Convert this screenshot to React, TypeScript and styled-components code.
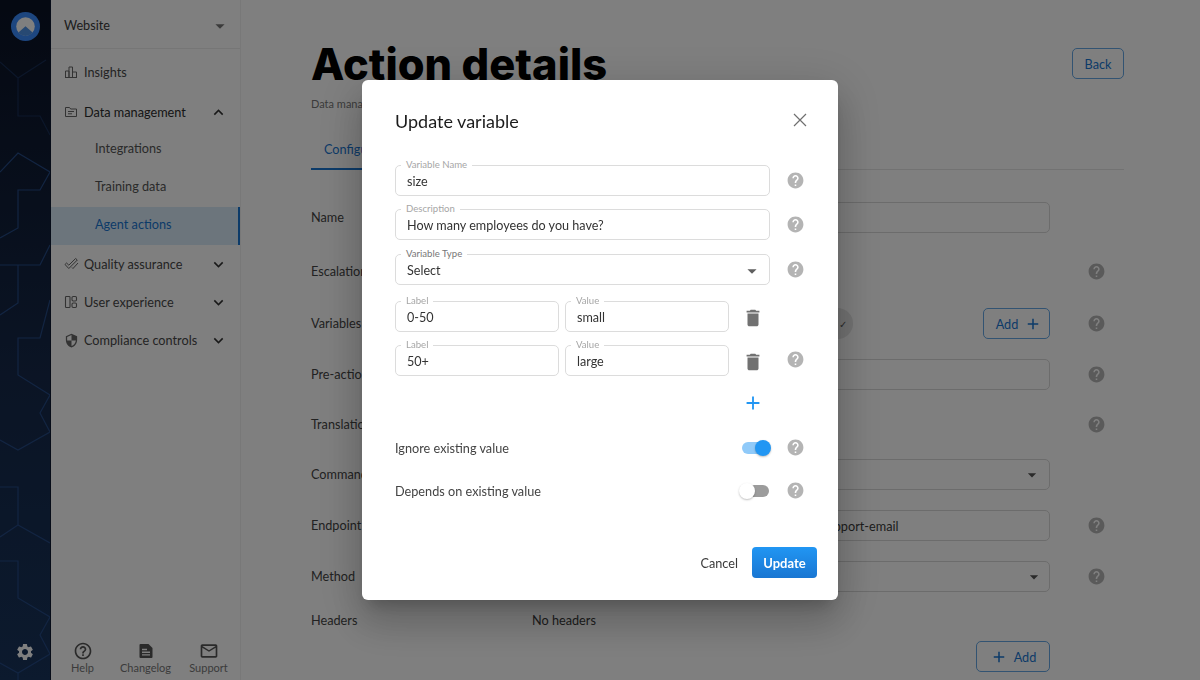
import * as React from 'react';

import styled, { createGlobalStyle } from 'styled-components';
import {
  MdAdd,
  MdArrowDropDown,
  MdDelete,
  MdExpandLess,
  MdExpandMore,
  MdHelp,
  MdHelpOutline,
  MdMailOutline,
  MdSecurity,
  MdSettings,
} from 'react-icons/md';

const colorBlue = '#1976d2';
const colorHelp = '#b4b4b4';

const navBelow = [
  { label: 'Quality assurance', icon: <CheckIcon /> },
  { label: 'User experience', icon: <PanelsIcon /> },
  { label: 'Compliance controls', icon: <MdSecurity size={15} /> },
];

const options = [
  { label: '0-50', value: 'small', help: false },
  { label: '50+', value: 'large', help: true },
];

function BarsIcon() {
  return (
    <svg width="14" height="14" viewBox="0 0 14 14" fill="none" stroke="currentColor" strokeWidth="1">
      <path d="M1.5 12.5V6h3.5v6.5M5 12.5V2h3.5v10.5M8.5 12.5V7H12.5v5.5M1 12.5h12" />
    </svg>
  );
}

function FolderIcon() {
  return (
    <svg width="14" height="14" viewBox="0 0 14 14" fill="none" stroke="currentColor" strokeWidth="1">
      <path d="M1.5 11.5V2.5h4l1.2 1.5h5.8v7.5zM4 6.5h6M4 8.8h4" />
    </svg>
  );
}

function CheckIcon() {
  return (
    <svg width="15" height="14" viewBox="0 0 15 14" fill="none" stroke="currentColor" strokeWidth="1">
      <path d="M1 7.5l1.6-1.5 2.2 2.2L11.6 1.5l1.7 1.5-8.5 8.5zM8 10.5l1 1 5-5.5" />
    </svg>
  );
}

function PanelsIcon() {
  return (
    <svg width="14" height="14" viewBox="0 0 14 14" fill="none" stroke="currentColor" strokeWidth="1.1">
      <rect x="1.5" y="1.5" width="4.5" height="11" rx="0.8" />
      <rect x="8" y="1.5" width="4.5" height="4.5" rx="1.2" />
      <rect x="8" y="8" width="4.5" height="4.5" rx="1.2" />
    </svg>
  );
}

function CloseIcon() {
  return (
    <svg width="14" height="14" viewBox="0 0 14 14" stroke="#6f6f6f" strokeWidth="1.2">
      <path d="M1 1l12 12M13 1L1 13" />
    </svg>
  );
}

function ChangelogIcon() {
  return (
    <svg width="20" height="20" viewBox="0 0 20 20">
      <path d="M3.5 4a1 1 0 0 1 1-1h8l4 4v9a1 1 0 0 1-1 1h-11a1 1 0 0 1-1-1z" fill="currentColor" />
      <path d="M6 8.5h5M6 11.2h8M6 13.9h8" stroke="#fff" strokeWidth="1.4" />
    </svg>
  );
}

function Logo() {
  return (
    <svg width="29" height="29" viewBox="0 0 29 29">
      <circle cx="14.5" cy="14.5" r="14.5" fill="#3a8cff" />
      <circle cx="14.5" cy="14.5" r="9.3" fill="#fff" />
      <path d="M7.4 20.6 14.5 14.2 21.6 20.6a9.3 9.3 0 0 1-14.2 0z" fill="#4f93e6" />
    </svg>
  );
}

function RailLines() {
  return (
    <RailArt viewBox="0 0 50 680" fill="none" stroke="#254a85" strokeWidth="1.2">
      <path d="M0 62 18 78 46 60M18 78V116H40L50 135" opacity="0.45" />
      <path d="M0 172 18 153 50 172 40 190H18V228L0 238" />
      <path d="M0 265H40L50 245M18 265V303L0 315M50 300 40 338H18V375L50 395 40 413 50 432 18 450 0 440" />
      <path d="M0 487H18V525L0 537M18 525 50 543" />
      <path d="M0 561H18V598L50 617 40 635 50 654 18 673 0 663M18 673V680" />
    </RailArt>
  );
}

function Help() {
  return (
    <HelpMark>
      <MdHelp size={19} />
    </HelpMark>
  );
}

const App = () => {
  return (
    <Page>
      <GlobalStyle />
      <Rail>
        <RailLines />
        <Logo />
        <MdSettings size={20} />
      </Rail>

      <Side>
        <SideHead>
          Website
          <MdArrowDropDown size={22} />
        </SideHead>
        <Nav>
          <NavItem>
            <NavIcon>
              <BarsIcon />
            </NavIcon>
            Insights
          </NavItem>
          <NavItem $strong>
            <NavIcon>
              <FolderIcon />
            </NavIcon>
            Data management
            <MdExpandLess size={19} />
          </NavItem>
          <SubItem>Integrations</SubItem>
          <SubItem>Training data</SubItem>
          <SubItem $active>Agent actions</SubItem>
          {navBelow.map((item) => (
            <NavItem key={item.label}>
              <NavIcon>{item.icon}</NavIcon>
              {item.label}
              <MdExpandMore size={19} />
            </NavItem>
          ))}
        </Nav>
        <SideFoot>
          <FootLink>
            <MdHelpOutline size={20} />
            Help
          </FootLink>
          <FootLink>
            <ChangelogIcon />
            Changelog
          </FootLink>
          <FootLink>
            <MdMailOutline size={20} />
            Support
          </FootLink>
        </SideFoot>
      </Side>

      <Main>
        <TitleRow>
          <Title>Action details</Title>
          <OutlineButton $width={52}>Back</OutlineButton>
        </TitleRow>
        <Crumb>Data management / Agent actions</Crumb>
        <Tabs>
          <Tab>Configuration</Tab>
        </Tabs>

        <Row $gap={32}>
          <RowLabel>Name</RowLabel>
          <Box />
        </Row>
        <Row $gap={23}>
          <RowLabel>Escalation</RowLabel>
          <div />
          <Help />
        </Row>
        <Row $gap={21}>
          <RowLabel>Variables</RowLabel>
          <VariableCell>
            <Chip>
              <ChipEnd>✓</ChipEnd>
            </Chip>
            <OutlineButton $width={67} $inset={5}>
              Add
              <MdAdd size={18} />
            </OutlineButton>
          </VariableCell>
          <Help />
        </Row>
        <Row $gap={20}>
          <RowLabel>Pre-action</RowLabel>
          <Box />
          <Help />
        </Row>
        <Row $gap={19}>
          <RowLabel>Translation</RowLabel>
          <div />
          <Help />
        </Row>
        <Row $gap={19}>
          <RowLabel>Command</RowLabel>
          <Box $end={7}>
            <MdArrowDropDown size={20} />
          </Box>
        </Row>
        <Row $gap={20}>
          <RowLabel>Endpoint</RowLabel>
          <Box $start={13}>https://api.example.com/v2.1/customers/actions/support-email</Box>
          <Help />
        </Row>
        <Row $gap={20}>
          <RowLabel>Method</RowLabel>
          <Box $end={5}>
            <MdArrowDropDown size={20} />
          </Box>
          <Help />
        </Row>
        <Row $gap={12}>
          <HeadersLabel>Headers</HeadersLabel>
          <span>No headers</span>
        </Row>
        <Row $gap={6}>
          <div />
          <AddCell>
            <OutlineButton $width={74}>
              <MdAdd size={18} />
              Add
            </OutlineButton>
          </AddCell>
        </Row>
      </Main>

      <Backdrop>
        <Modal>
          <ModalHead>
            <ModalTitle>Update variable</ModalTitle>
            <CloseIcon />
          </ModalHead>

          <FieldRow>
            <Field>
              <FieldLabel>Variable Name</FieldLabel>
              size
            </Field>
            <Help />
          </FieldRow>
          <FieldRow $after={14}>
            <Field>
              <FieldLabel>Description</FieldLabel>
              How many employees do you have?
            </Field>
            <Help />
          </FieldRow>
          <FieldRow>
            <Field>
              <FieldLabel $dark>Variable Type</FieldLabel>
              Select
              <MdArrowDropDown size={22} />
            </Field>
            <Help />
          </FieldRow>

          <Options>
            {options.map((option) => (
              <OptionRow key={option.label}>
                <Field>
                  <FieldLabel>Label</FieldLabel>
                  {option.label}
                </Field>
                <Field>
                  <FieldLabel>Value</FieldLabel>
                  {option.value}
                </Field>
                <TrashCell>
                  <MdDelete size={22} />
                </TrashCell>
                {option.help && <Help />}
              </OptionRow>
            ))}
          </Options>
          <PlusRow>
            <MdAdd size={22} />
          </PlusRow>

          <ToggleRow>
            <ToggleLabel>Ignore existing value</ToggleLabel>
            <Switch $on>
              <Thumb $on />
            </Switch>
            <Help />
          </ToggleRow>
          <ToggleRow>
            <ToggleLabel>Depends on existing value</ToggleLabel>
            <Switch>
              <Thumb />
            </Switch>
            <Help />
          </ToggleRow>

          <Actions>
            <Cancel>Cancel</Cancel>
            <Update>Update</Update>
          </Actions>
        </Modal>
      </Backdrop>
    </Page>
  );
};

//------------STYLED------------
const GlobalStyle = createGlobalStyle`
  html, body {
    margin: 0;
    height: 100%;
    overflow: hidden;
  }
  * {
    box-sizing: border-box;
  }
  body {
    font-family: Lato, "Noto Sans", sans-serif;
    font-size: 12.7px;
    color: #3a3a3a;
  }
`;

const Page = styled.div`
  display: flex;
  width: 1200px;
  height: 680px;
  overflow: hidden;
  background: #ffffff;
`;

const Rail = styled.div`
  position: relative;
  width: 51px;
  flex: none;
  padding: 12px 0 18px;
  display: flex;
  flex-direction: column;
  align-items: center;
  justify-content: space-between;
  color: #ffffff;
  background: linear-gradient(180deg, #0a1224 0%, #16294a 55%, #18345c 100%);
  border-right: 1px solid #0c1830;

  > svg:not(:first-child) {
    position: relative;
  }
`;

const RailArt = styled.svg`
  position: absolute;
  top: 0;
  left: 0;
  width: 50px;
  height: 680px;
`;

const Side = styled.div`
  width: 190px;
  flex: none;
  display: flex;
  flex-direction: column;
  border-right: 1px solid #f0f0f0;
  background: #fefefe;
`;

const SideHead = styled.div`
  height: 49px;
  flex: none;
  padding: 2px 9px 0 13px;
  display: flex;
  align-items: center;
  justify-content: space-between;
  border-bottom: 1px solid #ececec;
  font-size: 12.7px;

  svg {
    color: #777777;
    margin-top: 2px;
  }
`;

const Nav = styled.div`
  flex: 1;
  padding-top: 4px;
  display: flex;
  flex-direction: column;
`;

const NavItem = styled.div<{ $strong?: boolean }>`
  height: 38px;
  flex: none;
  padding: 0 12px 0 13px;
  display: flex;
  align-items: center;
  color: ${(props) => (props.$strong ? '#2c2c2c' : '#484848')};

  &:first-child {
    margin-bottom: 2px;
  }

  > svg {
    margin-left: auto;
    color: #333333;
  }
`;

const NavIcon = styled.span`
  width: 20px;
  flex: none;
  display: flex;
  align-items: center;
  color: #666666;
`;

const SubItem = styled.div<{ $active?: boolean }>`
  height: 38px;
  flex: none;
  padding: 0 0 5px 44px;
  display: flex;
  align-items: center;
  color: ${(props) => (props.$active ? colorBlue : '#555555')};
  background: ${(props) => (props.$active ? '#d8eaf8' : 'transparent')};
  border-right: 2px solid ${(props) => (props.$active ? colorBlue : 'transparent')};
`;

const SideFoot = styled.div`
  height: 39px;
  flex: none;
  display: flex;
  align-items: flex-start;
`;

const FootLink = styled.div`
  width: 63px;
  flex: none;
  display: flex;
  flex-direction: column;
  align-items: center;
  font-size: 11px;
  line-height: 14px;
  color: #777777;

  svg {
    color: #555555;
  }
`;

const Main = styled.div`
  flex: 1;
  min-width: 0;
  padding: 40px 76px 0 70px;
`;

const TitleRow = styled.div`
  display: flex;
  align-items: flex-start;
  justify-content: space-between;
`;

const Title = styled.h1`
  margin: 0;
  height: 48px;
  font-family: Inter, sans-serif;
  font-size: 43.4px;
  font-weight: 800;
  line-height: 48px;
  color: #000000;
`;

const OutlineButton = styled.div<{ $width: number; $inset?: number }>`
  width: ${(props) => props.$width}px;
  height: 31px;
  margin-top: 8px;
  padding-left: ${(props) => props.$inset || 0}px;
  flex: none;
  display: flex;
  align-items: center;
  justify-content: center;
  gap: 6px;
  border: 1px solid #64a6e4;
  border-radius: 5px;
  color: ${colorBlue};
`;

const Crumb = styled.div`
  margin-top: 8px;
  font-size: 11px;
  line-height: 16px;
  color: #777777;
`;

const Tabs = styled.div`
  margin-top: 17px;
  height: 41px;
  border-bottom: 1px solid #e4e4e4;
`;

const Tab = styled.div`
  width: 103px;
  height: 41px;
  padding: 0 0 0 13px;
  display: flex;
  align-items: center;
  border-bottom: 2px solid ${colorBlue};
  color: ${colorBlue};
`;

const Row = styled.div<{ $gap: number }>`
  height: 31px;
  margin-top: ${(props) => props.$gap}px;
  display: grid;
  grid-template-columns: 221px 518px 1fr;
  align-items: center;

  ${OutlineButton} {
    margin-top: 0;
  }
`;

const RowLabel = styled.div`
  padding-bottom: 2px;
  color: #444444;
`;

const HeadersLabel = styled.div`
  color: #444444;
`;

const Box = styled.div<{ $start?: number; $end?: number }>`
  height: 31px;
  padding: 0 ${(props) => props.$end || 8}px 0 ${(props) => props.$start || 10}px;
  display: flex;
  align-items: center;
  justify-content: space-between;
  white-space: nowrap;
  overflow: hidden;
  border: 1px solid #d8d8d8;
  border-radius: 5px;

  svg {
    margin-left: auto;
    color: #555555;
  }
`;

const VariableCell = styled.div`
  display: flex;
  align-items: center;
  justify-content: space-between;
`;

const Chip = styled.div`
  width: 321px;
  height: 31px;
  padding-right: 6px;
  display: flex;
  align-items: center;
  justify-content: flex-end;
  border-radius: 16px;
  background: #e6e6e6;
`;

const ChipEnd = styled.span`
  font-size: 10px;
  color: #555555;
`;

const AddCell = styled.div`
  display: flex;
  justify-content: flex-end;
`;

const HelpMark = styled.span`
  display: flex;
  align-items: center;
  justify-content: center;
  width: 92px;
  color: ${colorHelp};
`;

const Backdrop = styled.div`
  position: fixed;
  inset: 0;
  display: flex;
  align-items: flex-start;
  justify-content: center;
  padding-top: 80px;
  background: rgba(0, 0, 0, 0.5);
`;

const Modal = styled.div`
  width: 476px;
  height: 520px;
  padding: 0 0 0 33px;
  background: #ffffff;
  border-radius: 6px;
  box-shadow: 0 11px 15px -7px rgba(0, 0, 0, 0.2), 0 24px 38px 3px rgba(0, 0, 0, 0.14),
    0 9px 46px 8px rgba(0, 0, 0, 0.12);
  display: flex;
  flex-direction: column;

  ${HelpMark} {
    width: 50px;
    margin-left: auto;
  }
`;

const ModalHead = styled.div`
  height: 85px;
  flex: none;
  padding: 0 31px 3px 0;
  display: flex;
  align-items: center;
  justify-content: space-between;

  > svg {
    margin-bottom: 2px;
  }
`;

const ModalTitle = styled.div`
  font-size: 18px;
  color: #1c1c1c;
`;

const FieldRow = styled.div<{ $after?: number }>`
  width: 425px;
  height: 31px;
  margin-bottom: ${(props) => props.$after || 13}px;
  flex: none;
  display: flex;
  align-items: center;
`;

const Field = styled.div`
  position: relative;
  width: 375px;
  height: 31px;
  flex: none;
  padding: 2px 6px 0 11px;
  display: flex;
  align-items: center;
  justify-content: space-between;
  border: 1px solid #dcdcdc;
  border-radius: 5px;
  font-size: 12.6px;
  color: #333333;

  > svg {
    color: #5f5f5f;
  }
`;

const FieldLabel = styled.span<{ $dark?: boolean }>`
  position: absolute;
  top: -7px;
  left: 5px;
  padding: 0 5px;
  background: #ffffff;
  font-size: 9.6px;
  line-height: 12px;
  color: ${(props) => (props.$dark ? '#777777' : '#a6a6a6')};
`;

const Options = styled.div`
  margin-top: 3px;
  display: flex;
  flex-direction: column;
  gap: 13px;
`;

const OptionRow = styled.div`
  width: 425px;
  height: 31px;
  display: flex;
  align-items: center;
  gap: 6px;

  ${Field} {
    width: 164px;
    justify-content: flex-start;
  }

  ${HelpMark} {
    width: 50px;
    margin: -3px 0 0 -7px;
  }
`;

const TrashCell = styled.span`
  width: 36px;
  padding-left: 7px;
  margin-top: 3px;
  flex: none;
  display: flex;
  color: #717171;
`;

const PlusRow = styled.div`
  width: 369px;
  margin-top: 16px;
  height: 22px;
  flex: none;
  display: flex;
  justify-content: flex-end;
  color: #2196f3;
`;

const ToggleRow = styled.div`
  width: 425px;
  height: 20px;
  margin-top: 23.5px;
  flex: none;
  display: flex;
  align-items: center;

  & + & {
    margin-top: 23px;
  }
`;

const ToggleLabel = styled.div`
  width: 347px;
  flex: none;
  color: #444444;
`;

const Switch = styled.div<{ $on?: boolean }>`
  position: relative;
  width: 27px;
  height: 12px;
  flex: none;
  border-radius: 6px;
  background: ${(props) => (props.$on ? '#90caf9' : '#9c9c9c')};
`;

const Thumb = styled.span<{ $on?: boolean }>`
  position: absolute;
  top: -2px;
  left: ${(props) => (props.$on ? '13px' : '-3px')};
  width: 16px;
  height: 16px;
  border-radius: 50%;
  background: ${(props) => (props.$on ? '#2196f3' : '#ffffff')};
  box-shadow: 0 1px 2px rgba(0, 0, 0, 0.25);
`;

const Actions = styled.div`
  margin-top: auto;
  margin-bottom: 22px;
  padding-right: 21px;
  display: flex;
  align-items: center;
  justify-content: flex-end;
  gap: 14px;
`;

const Cancel = styled.div`
  color: #3a3a3a;
`;

const Update = styled.div`
  width: 65px;
  height: 31px;
  display: flex;
  align-items: center;
  justify-content: center;
  border-radius: 4px;
  background: linear-gradient(180deg, #2196f3, #1976d2);
  color: #ffffff;
  font-size: 13px;
  font-weight: 700;
`;

export default App;
